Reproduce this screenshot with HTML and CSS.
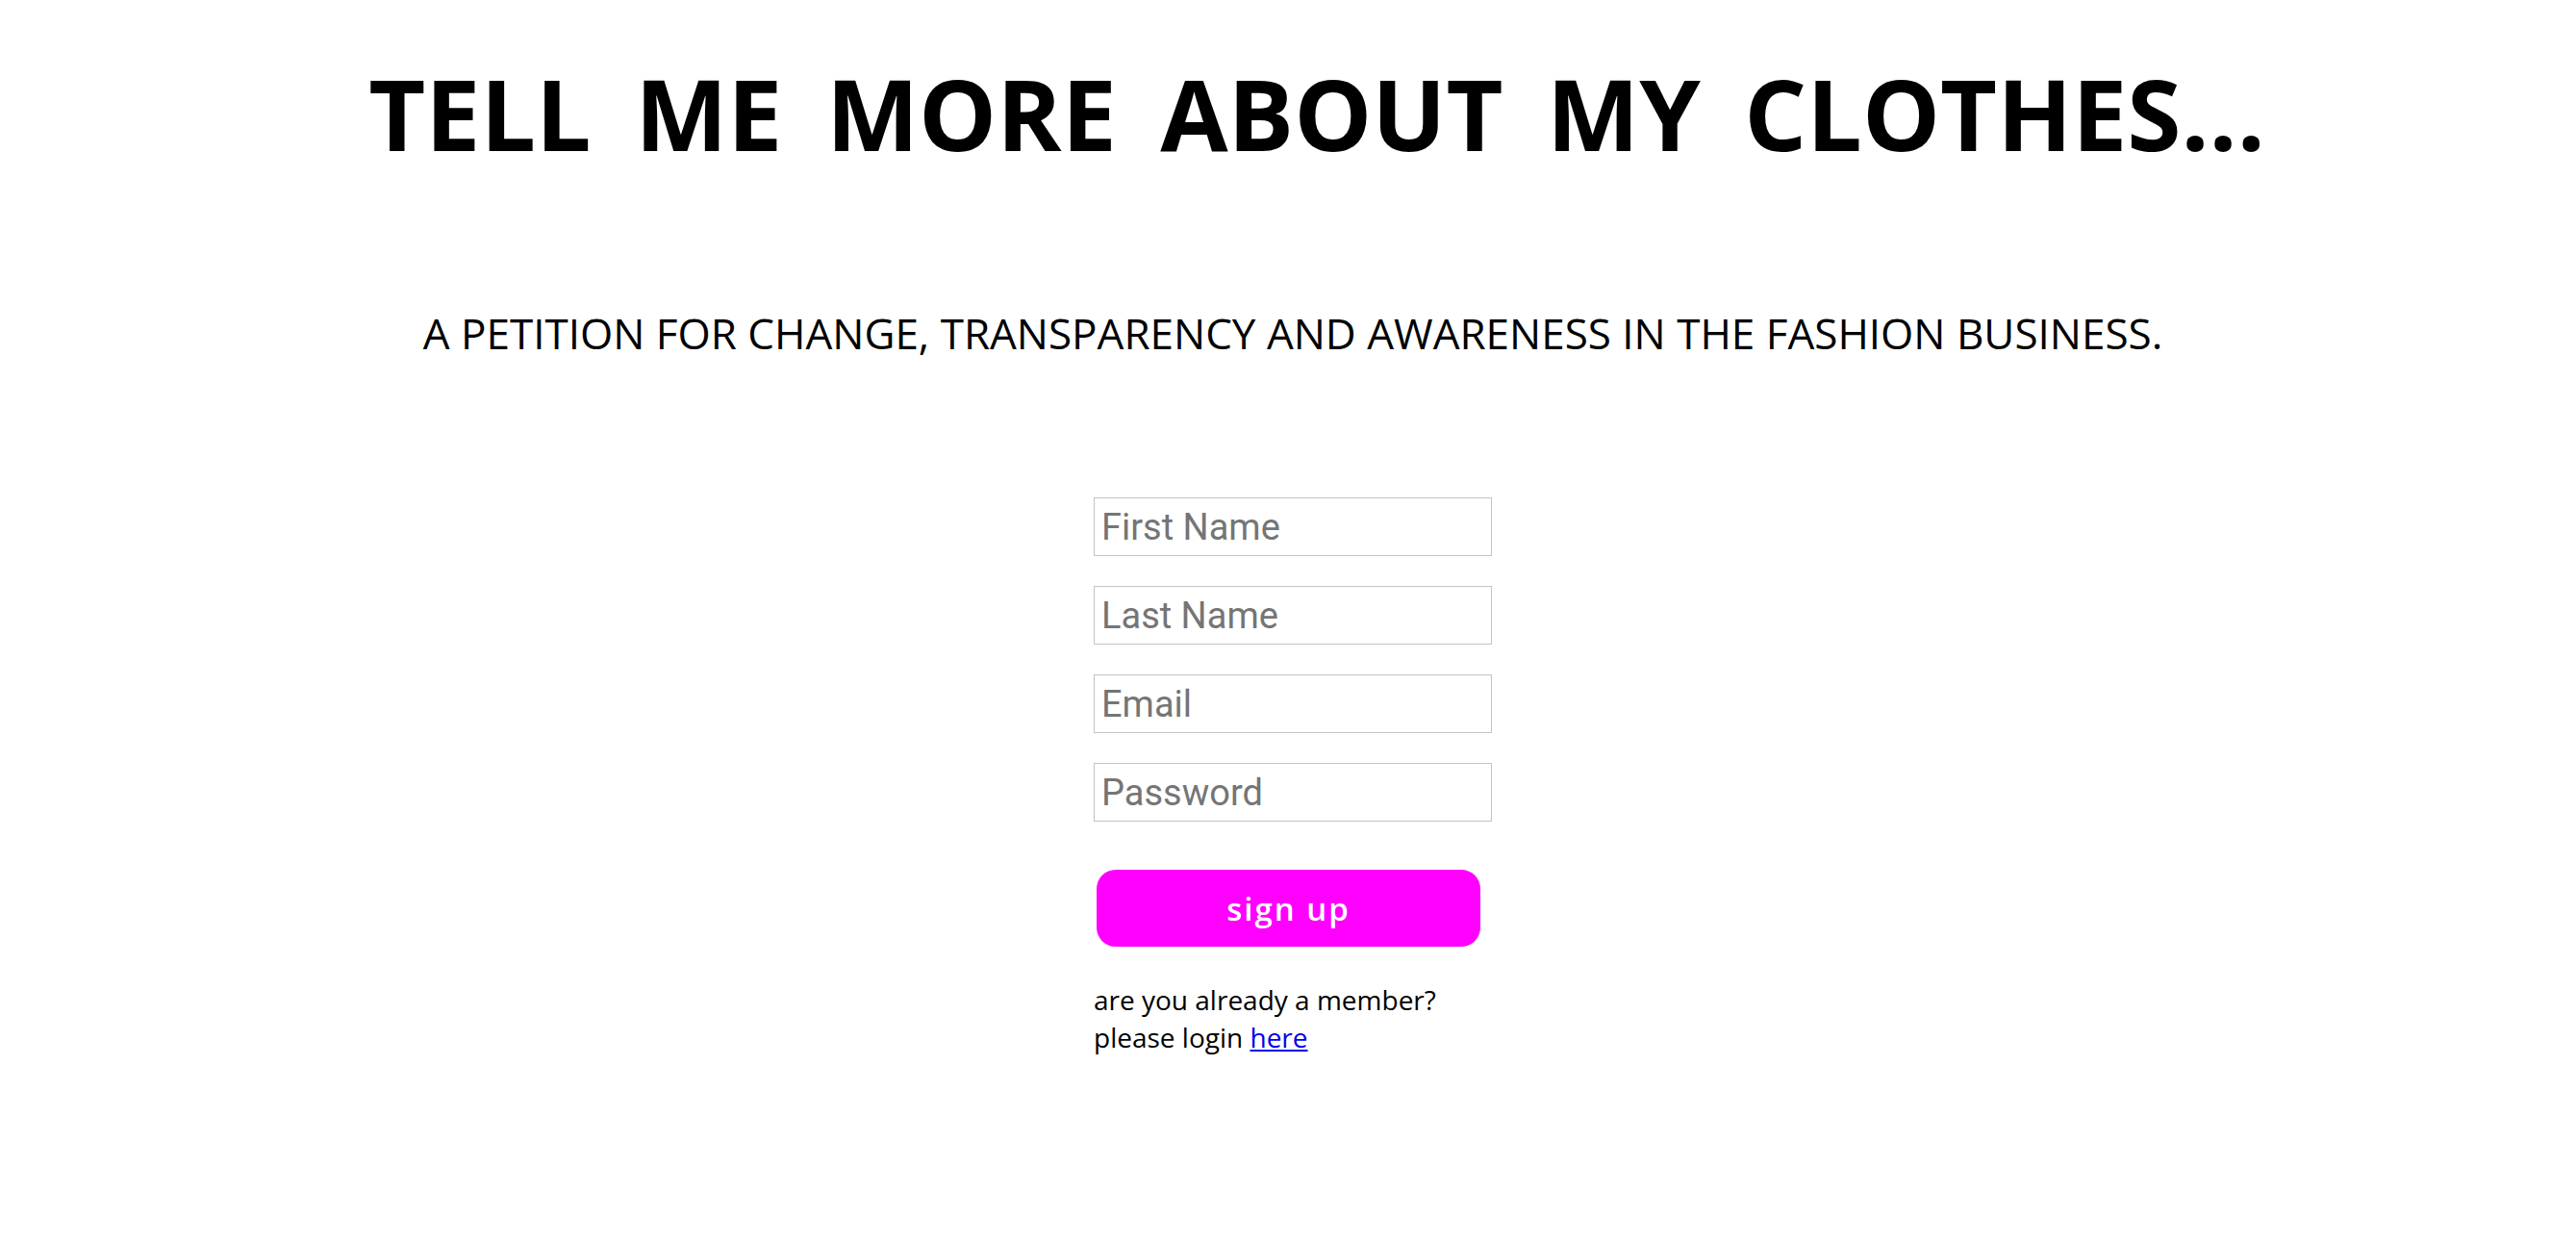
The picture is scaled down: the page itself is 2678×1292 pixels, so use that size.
FILE: index.html
```html
<!DOCTYPE html>
<html lang="en">
<head>
<meta charset="utf-8">
<title>Tell me more about my clothes</title>
<link rel="stylesheet" href="styles.css">
</head>
<body>
<main class="page">
  <h1 class="title">TELL ME MORE ABOUT MY CLOTHES...</h1>
  <h2 class="subtitle">A PETITION FOR CHANGE, TRANSPARENCY AND AWARENESS IN THE FASHION BUSINESS.</h2>
  <form class="signup">
    <input class="field" type="text" placeholder="First Name">
    <input class="field" type="text" placeholder="Last Name">
    <input class="field" type="email" placeholder="Email">
    <input class="field" type="password" placeholder="Password">
    <button class="btn" type="button">sign up</button>
    <p class="member">are you already a member?<br>please login <a href="#" class="link">here</a></p>
  </form>
</main>
</body>
</html>
```

FILE: styles.css
```css
html, body {
  margin: 0;
  padding: 0;
  background: #ffffff;
}

.page {
  display: flex;
  flex-direction: column;
  align-items: center;
  padding-left: 10px;
}

.title {
  margin: 67px 0 0 0;
  font-family: "Open Sans", "DejaVu Sans", sans-serif;
  font-weight: 700;
  font-size: 102px;
  line-height: 1;
  letter-spacing: 0;
  word-spacing: 19px;
  color: #000;
  white-space: nowrap;
  padding-left: 50px;
}

.subtitle {
  margin: 155px 0 0 0;
  font-family: "Open Sans", "DejaVu Sans", sans-serif;
  font-weight: 400;
  font-size: 44px;
  line-height: 1;
  color: #000;
  white-space: nowrap;
}

.signup {
  margin-top: 149px;
  width: 414px;
  display: flex;
  flex-direction: column;
  align-items: flex-start;
}

.field {
  box-sizing: border-box;
  width: 414px;
  height: 61px;
  margin: 0 0 31px 0;
  padding: 0 7px;
  border: 1px solid #c4c4c4;
  border-radius: 0;
  font-family: "Roboto", "Inter", sans-serif;
  font-size: 38px;
  color: #333;
  background: #fff;
  outline: none;
}

.field::placeholder {
  color: #757575;
}

.field:last-of-type {
  margin-bottom: 50px;
}

.btn {
  margin: 0 0 0 3px;
  width: 399px;
  height: 80px;
  border: none;
  border-radius: 20px;
  background: #ff00ff;
  color: #ffffff;
  font-family: "Open Sans", "DejaVu Sans", sans-serif;
  font-weight: 600;
  font-size: 33px;
  letter-spacing: 2px;
  padding: 0;
}

.member {
  margin: 36px 0 0 0;
  font-family: "Open Sans", "DejaVu Sans", sans-serif;
  font-size: 28px;
  line-height: 39px;
  color: #000;
}

.link {
  color: #0000ee;
  text-decoration: underline;
}
```
